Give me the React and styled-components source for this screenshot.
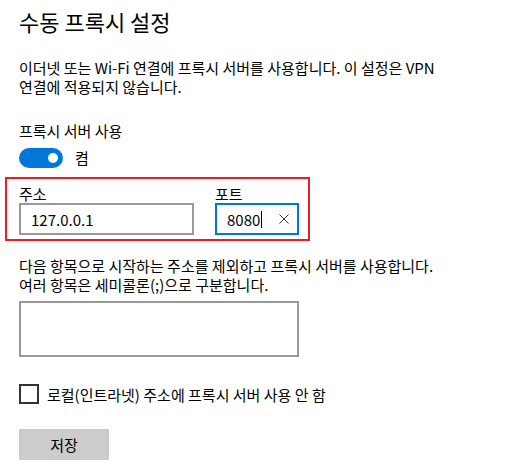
import React from "react";
import styled, { createGlobalStyle } from "styled-components";

const GlobalStyle = createGlobalStyle`
  body {
    margin: 0;
    background: #ffffff;
    font-family: "Noto Sans CJK KR", "Noto Sans", sans-serif;
    color: #000000;
  }
`;

const Page = styled.div`
  width: 505px;
  height: 473px;
  box-sizing: border-box;
  padding: 6px 0 0 19px;
  background: #ffffff;
  overflow: hidden;
`;

const Title = styled.h1`
  margin: 0;
  font-size: 22px;
  font-weight: 400;
  line-height: 30px;
`;

const Text = styled.p`
  margin: ${(props) => props.$mt || 0}px 0 0;
  font-size: 15px;
  line-height: 19px;
  white-space: nowrap;
`;

const ToggleRow = styled.div`
  display: flex;
  align-items: center;
  gap: 12px;
  margin-top: 8px;
  height: 20px;
`;

const Toggle = styled.div`
  width: 44px;
  height: 20px;
  box-sizing: border-box;
  border-radius: 10px;
  background: #0078d7;
  display: flex;
  align-items: center;
  justify-content: flex-end;
  padding-right: 5px;
`;

const Knob = styled.span`
  width: 10px;
  height: 10px;
  border-radius: 50%;
  background: #ffffff;
`;

const ToggleLabel = styled.span`
  font-size: 15px;
  line-height: 20px;
`;

const Highlight = styled.div`
  margin: 9px 0 0 -14px;
  width: 305px;
  height: 64px;
  box-sizing: border-box;
  border: 2px solid #ed1c24;
  padding: 5px 0 0 12px;
  display: flex;
  gap: 21px;
`;

const Field = styled.div`
  display: flex;
  flex-direction: column;
  width: ${(props) => props.$width}px;
`;

const Label = styled.span`
  font-size: 15px;
  line-height: 19px;
`;

const InputBox = styled.div`
  height: 32px;
  box-sizing: border-box;
  border: 2px solid ${(props) => (props.$focused ? "#0078d7" : "#999999")};
  display: flex;
  align-items: center;
  padding: 0 8px 0 10px;
  font-size: 15px;
`;

const Caret = styled.span`
  width: 1px;
  height: 17px;
  background: #000000;
  margin-left: 1px;
`;

const ClearIcon = styled.svg`
  margin-left: auto;
  width: 10px;
  height: 10px;
`;

const TextArea = styled.div`
  margin-top: 7px;
  width: 280px;
  height: 56px;
  box-sizing: border-box;
  border: 2px solid #999999;
`;

const CheckRow = styled.label`
  display: flex;
  align-items: center;
  gap: 8px;
  margin-top: 27px;
  height: 20px;
  font-size: 15px;
`;

const CheckBox = styled.span`
  width: 20px;
  height: 20px;
  box-sizing: border-box;
  border: 2px solid #333333;
`;

const SaveButton = styled.button`
  margin-top: 25px;
  width: 90px;
  height: 31px;
  border: none;
  background: #cccccc;
  font-family: inherit;
  font-size: 15px;
  color: #000000;
  padding: 0;
`;

export default function App() {
  return (
    <>
      <GlobalStyle />
      <Page>
        <Title>수동 프록시 설정</Title>
        <Text $mt={22}>
          이더넷 또는 Wi-Fi 연결에 프록시 서버를 사용합니다. 이 설정은 VPN
          <br />
          연결에 적용되지 않습니다.
        </Text>
        <Text $mt={25}>프록시 서버 사용</Text>
        <ToggleRow>
          <Toggle>
            <Knob />
          </Toggle>
          <ToggleLabel>켬</ToggleLabel>
        </ToggleRow>
        <Highlight>
          <Field $width={175}>
            <Label>주소</Label>
            <InputBox>127.0.0.1</InputBox>
          </Field>
          <Field $width={84}>
            <Label>포트</Label>
            <InputBox $focused>
              8080
              <Caret />
              <ClearIcon viewBox="0 0 10 10">
                <path d="M0.5 0.5 L9.5 9.5 M9.5 0.5 L0.5 9.5" stroke="#333" strokeWidth="1" />
              </ClearIcon>
            </InputBox>
          </Field>
        </Highlight>
        <Text $mt={15}>
          다음 항목으로 시작하는 주소를 제외하고 프록시 서버를 사용합니다.
          <br />
          여러 항목은 세미콜론(;)으로 구분합니다.
        </Text>
        <TextArea />
        <CheckRow>
          <CheckBox />
          로컬(인트라넷) 주소에 프록시 서버 사용 안 함
        </CheckRow>
        <SaveButton>저장</SaveButton>
      </Page>
    </>
  );
}
